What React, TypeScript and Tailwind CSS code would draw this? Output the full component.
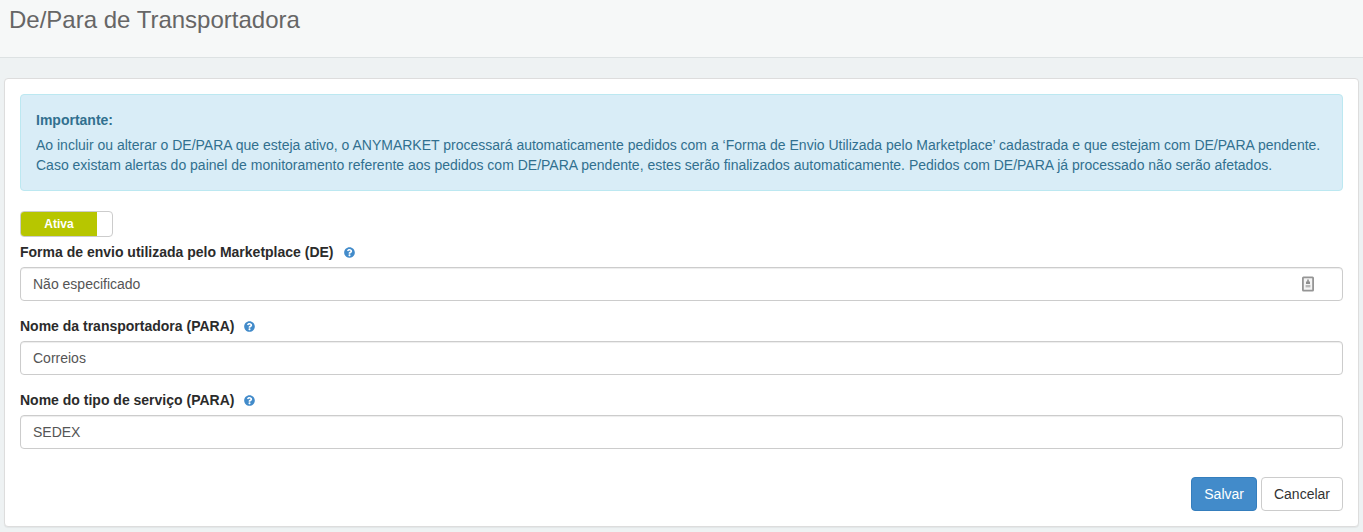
import { useState } from 'react'
import { FaQuestionCircle } from 'react-icons/fa'

type FieldProps = {
    id: string
    label: string
    value: string
    onChange: (value: string) => void
    autofill?: boolean
}

function AutofillIcon() {
    return (
        <svg
            className="pointer-events-none absolute top-[9px] right-[29px] h-4 w-3"
            viewBox="0 0 12 16"
            aria-hidden="true"
        >
            <rect
                x="0.9"
                y="1.4"
                width="10.2"
                height="13.2"
                rx="0.6"
                fill="#f4f4f4"
                stroke="#959595"
                strokeWidth="1.8"
            />
            <path d="M5.2 3.6h1.6v2h1.2V8H4V5.6h1.2z" fill="#8f8f8f" />
            <path d="M3.6 9h4.8v2.4H3.6z" fill="#b8b8b8" />
        </svg>
    )
}

function Field({ id, label, value, onChange, autofill }: FieldProps) {
    return (
        <div className="mb-[15px]">
            <div className="mb-[5px] flex items-center gap-[10px]">
                <label htmlFor={id} className="font-bold text-[#2b2b2b]">
                    {label}
                </label>
                <button
                    type="button"
                    aria-label={`Ajuda: ${label}`}
                    className="cursor-pointer text-[#428bca]"
                >
                    <FaQuestionCircle className="size-[11px]" />
                </button>
            </div>
            <div className="relative">
                <input
                    id={id}
                    type="text"
                    value={value}
                    onChange={(e) => onChange(e.target.value)}
                    className="block h-[34px] w-full rounded border border-[#ccc] bg-white px-3 text-[#555] shadow-[inset_0_1px_1px_rgba(0,0,0,0.075)] outline-none focus:border-[#66afe9]"
                />
                {autofill && <AutofillIcon />}
            </div>
        </div>
    )
}

export default function App() {
    const [active, setActive] = useState(true)
    const [formData, setFormData] = useState({
        shipping: 'Não especificado',
        carrier: 'Correios',
        service: 'SEDEX',
    })

    const handleFormUpdate = (field: string, value: string) => {
        setFormData((prev) => ({ ...prev, [field]: value }))
    }

    return (
        <div className="min-h-screen bg-[#eef2f3] pb-[5px] font-['Liberation_Sans',Arial,sans-serif] text-sm/5 text-[#333]">
            <header className="border-b border-[#dde2e3] bg-[#f6f8f8] px-[9px] pt-[5px] pb-[22px]">
                <h1 className="text-2xl/[30px] text-[#666]">
                    De/Para de Transportadora
                </h1>
            </header>

            <main className="mx-1 mt-5 rounded border border-[#ddd] bg-white p-[15px] shadow-[0_1px_1px_rgba(0,0,0,0.05)]">
                <div
                    role="note"
                    className="mb-5 rounded border border-[#bce8f1] bg-[#d9edf7] p-[15px] text-[#31708f]"
                >
                    <strong className="mb-[5px] block">Importante:</strong>
                    <p>
                        Ao incluir ou alterar o DE/PARA que esteja ativo, o
                        ANYMARKET processará automaticamente pedidos com a
                        ‘Forma de Envio Utilizada pelo Marketplace’ cadastrada e
                        que estejam com DE/PARA pendente.
                        <br />
                        Caso existam alertas do painel de monitoramento
                        referente aos pedidos com DE/PARA pendente, estes serão
                        finalizados automaticamente. Pedidos com DE/PARA já
                        processado não serão afetados.
                    </p>
                </div>

                <form onSubmit={(e) => e.preventDefault()}>
                    <button
                        type="button"
                        role="switch"
                        aria-checked={active}
                        onClick={() => setActive(!active)}
                        className={`mb-[5px] flex h-[26px] w-[93px] cursor-pointer overflow-hidden rounded border border-[#ccc] bg-white text-xs/6 font-bold ${
                            active ? '' : 'flex-row-reverse'
                        }`}
                    >
                        <span
                            className={`w-[76px] text-center ${
                                active
                                    ? 'bg-[#b7c600] text-white'
                                    : 'bg-[#eee] text-[#333]'
                            }`}
                        >
                            {active ? 'Ativa' : 'Inativa'}
                        </span>
                    </button>

                    <Field
                        id="shipping"
                        label="Forma de envio utilizada pelo Marketplace (DE)"
                        value={formData.shipping}
                        onChange={(value) =>
                            handleFormUpdate('shipping', value)
                        }
                        autofill
                    />
                    <Field
                        id="carrier"
                        label="Nome da transportadora (PARA)"
                        value={formData.carrier}
                        onChange={(value) => handleFormUpdate('carrier', value)}
                    />
                    <Field
                        id="service"
                        label="Nome do tipo de serviço (PARA)"
                        value={formData.service}
                        onChange={(value) => handleFormUpdate('service', value)}
                    />

                    <div className="mt-7 flex justify-end gap-1">
                        <button
                            type="submit"
                            className="cursor-pointer rounded border border-[#357ebd] bg-[#428bca] px-3 py-[6px] text-white"
                        >
                            Salvar
                        </button>
                        <button
                            type="button"
                            className="cursor-pointer rounded border border-[#ccc] bg-white px-3 py-[6px] text-[#333]"
                        >
                            Cancelar
                        </button>
                    </div>
                </form>
            </main>
        </div>
    )
}
